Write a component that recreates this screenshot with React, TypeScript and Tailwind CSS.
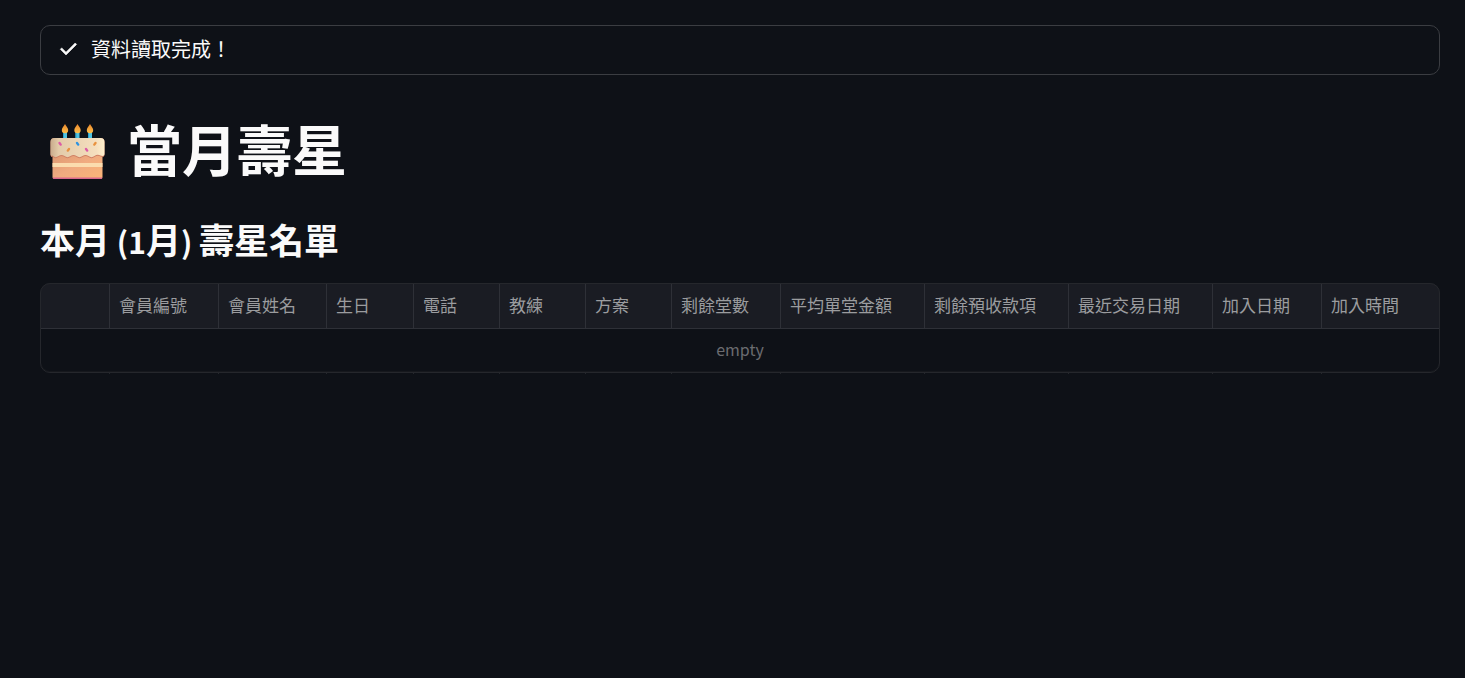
type Column = { label: string; width: string };

const columns: Column[] = [
    { label: '會員編號', width: 'w-[109px]' },
    { label: '會員姓名', width: 'w-[108px]' },
    { label: '生日', width: 'w-[87px]' },
    { label: '電話', width: 'w-[86px]' },
    { label: '教練', width: 'w-[86px]' },
    { label: '方案', width: 'w-[86px]' },
    { label: '剩餘堂數', width: 'w-[109px]' },
    { label: '平均單堂金額', width: 'w-[144px]' },
    { label: '剩餘預收款項', width: 'w-[144px]' },
    { label: '最近交易日期', width: 'w-[144px]' },
    { label: '加入日期', width: 'w-[109px]' },
    { label: '加入時間', width: '' },
];

function CheckIcon() {
    return (
        <svg viewBox="0 0 24 24" className="w-6 h-6 shrink-0" fill="currentColor" stroke="currentColor" strokeWidth="0.6" aria-hidden="true">
            <path d="M9 18l-5.700-5.700 1.425-1.425L9 15.150l9.175-9.175L19.600 7.400z" />
        </svg>
    );
}

function CakeIcon() {
    return (
        <svg viewBox="0 0 56 56" className="w-14 h-14 mt-[9px] shrink-0" aria-hidden="true">
            <defs>
                <linearGradient id="sponge" x1="0" y1="0" x2="1" y2="1">
                    <stop offset="0" stopColor="#dc9770" />
                    <stop offset="0.5" stopColor="#f0ab80" />
                    <stop offset="1" stopColor="#fbb577" />
                </linearGradient>
                <linearGradient id="frosting" x1="0" y1="0" x2="1" y2="0">
                    <stop offset="0" stopColor="#c9ab8c" />
                    <stop offset="0.15" stopColor="#e3cba9" />
                    <stop offset="0.85" stopColor="#f5dfbf" />
                    <stop offset="1" stopColor="#fff0cc" />
                </linearGradient>
                <linearGradient id="flame" x1="0" y1="0" x2="0" y2="1">
                    <stop offset="0" stopColor="#e9862b" />
                    <stop offset="1" stopColor="#ffc04a" />
                </linearGradient>
            </defs>

            {/* Velas */}
            {[15, 27.5, 40].map((x) => (
                <g key={x}>
                    <rect x={x - 2} y="8" width="4" height="8" fill="#4fc3e0" />
                    <rect x={x - 2} y="8" width="1" height="8" fill="#2ba3cf" />
                    <path d={`M${x} 0c1 2.200 3.200 3.800 3.200 6a3.200 3.200 0 0 1-6.400 0c0-2.200 2.200-3.800 3.200-6z`} fill="url(#flame)" />
                </g>
            ))}

            {/* Bizcocho */}
            <path d="M2.500 28h50v25a2 2 0 0 1-2 2h-46a2 2 0 0 1-2-2z" fill="url(#sponge)" />
            <rect x="2.5" y="39" width="50" height="4" fill="#fbdcae" />
            <path d="M2.500 53.500h50a2 2 0 0 1-2 1.500h-46a2 2 0 0 1-2-1.500z" fill="#d8678c" />

            {/* Glaseado */}
            <path
                d="M0.500 18a4 4 0 0 1 4-4h46a4 4 0 0 1 4 4v13c0 2-2 2.500-4 1.500s-4-1-6 .5-4 1.500-6 0-4-1.500-6 0-4 1.500-6 0-4-1.500-6 0-4 1.500-6 0-4-1.500-6 0-4 1.500-5.500 0S0.500 33 0.500 31z"
                fill="#cf8064"
            />
            <path
                d="M0.500 18a4 4 0 0 1 4-4h46a4 4 0 0 1 4 4v12c0 2-2 2.500-4 1.500s-4-1-6 .5-4 1.500-6 0-4-1.500-6 0-4 1.500-6 0-4-1.500-6 0-4 1.500-6 0-4-1.500-6 0-4 1.500-5.500 0S0.500 32 0.500 30z"
                fill="url(#frosting)"
            />

            {/* Chispas */}
            <g strokeWidth="2.4" strokeLinecap="round">
                <path d="M9.500 19l1.200 1.600M36 25l1.200 1.600" stroke="#dc5ba6" />
                <path d="M27 19l1.200 1.600" stroke="#2f93e0" />
                <path d="M19 25l-1.200 1.600M45.500 19l-1.200 1.600" stroke="#e9923f" />
            </g>
        </svg>
    );
}

function StatusBox() {
    return (
        <div role="status" className="flex items-center gap-[10px] h-[50px] px-4 pb-[3px] rounded-[10px] border border-[#3b3d42]">
            <CheckIcon />
            <span className="text-[20px] leading-8">資料讀取完成！</span>
        </div>
    );
}

function MemberTable() {
    return (
        <div className="relative mt-[18px]">
            <table className="w-full table-fixed border-separate border-spacing-0 rounded-[10px] overflow-hidden text-[17px] leading-6">
                <thead>
                    <tr className="h-[46px] bg-[#1a1c23] text-[#9b9c9f]">
                        <th className="w-[70px] border-r border-b border-[#2e3037]" aria-label="選取"></th>
                        {columns.map((column) => (
                            <th
                                key={column.label}
                                scope="col"
                                className={`${column.width} p-0 pl-[9px] pb-[2px] text-left font-normal whitespace-nowrap border-r last:border-r-0 border-b border-[#2e3037]`}
                            >
                                {column.label}
                            </th>
                        ))}
                    </tr>
                </thead>
                <tbody>
                    <tr className="h-11">
                        <td colSpan={columns.length + 1} className="p-0 pb-1 text-center text-[16px] text-[#6b6c70]">
                            empty
                        </td>
                    </tr>
                </tbody>
                {/* Remate de las líneas de columna bajo el borde */}
                <tfoot aria-hidden="true">
                    <tr className="h-px">
                        <td className="p-0 border-r border-[#25272c]"></td>
                        {columns.map((column) => (
                            <td key={column.label} className="p-0 border-r last:border-r-0 border-[#25272c]"></td>
                        ))}
                    </tr>
                </tfoot>
            </table>
            {/* Marco por encima de las celdas */}
            <div className="absolute inset-x-0 top-0 bottom-px rounded-[10px] border border-[#25272c] shadow-[inset_0_-1px_0_#16181d] pointer-events-none"></div>
        </div>
    );
}

export default function App() {
    return (
        <main className="min-h-screen bg-[#0e1117] text-[#fafafa] pl-10 pr-[25px] pt-[25px] font-['Noto_Sans_CJK_TC',sans-serif]">
            <StatusBox />
            <h1 className="flex items-center gap-[21px] mt-9 pl-[10px] text-[55px] leading-[72px] font-bold">
                <CakeIcon />
                當月壽星
            </h1>
            <h2 className="mt-8 text-[35px] leading-[48px] font-bold">
                本月<span className="text-[30px]"> (1</span>月<span className="text-[30px]">) </span>壽星名單
            </h2>
            <MemberTable />
        </main>
    );
}
